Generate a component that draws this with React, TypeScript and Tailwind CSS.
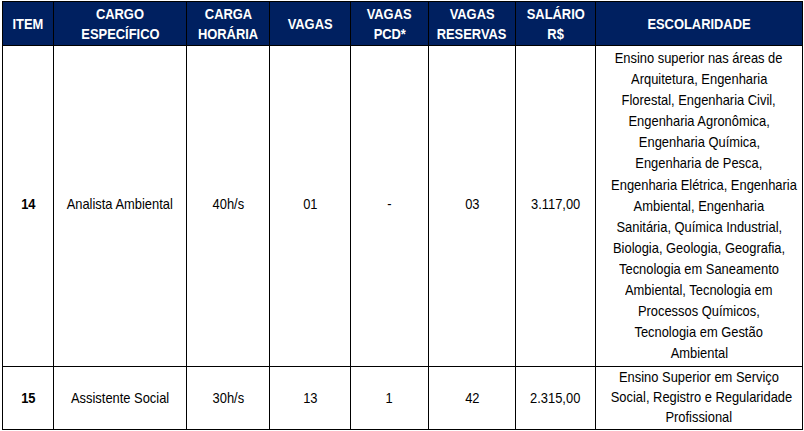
const heads = [
  ["ITEM"],
  ["CARGO", "ESPECÍFICO"],
  ["CARGA", "HORÁRIA"],
  ["VAGAS"],
  ["VAGAS", "PCD*"],
  ["VAGAS", "RESERVAS"],
  ["SALÁRIO", "R$"],
  ["ESCOLARIDADE"],
];

const widths = ["w-[51px]", "w-[133px]", "w-[83px]", "w-[81px]", "w-[78px]", "w-[87px]", "w-[80px]", "w-[207px]"];

const rows = [
  {
    item: "14",
    cargo: "Analista Ambiental",
    carga: "40h/s",
    vagas: "01",
    pcd: "-",
    reservas: "03",
    salario: "3.117,00",
    cell: "pb-[4px]",
    pad: "pt-[1px] pb-[3px] leading-[21.1px]",
    escolaridade: [
      "Ensino superior nas áreas de",
      "Arquitetura, Engenharia",
      "Florestal, Engenharia Civil,",
      "Engenharia Agronômica,",
      "Engenharia Química,",
      "Engenharia de Pesca,",
      "Engenharia Elétrica, Engenharia",
      "Ambiental, Engenharia",
      "Sanitária, Química Industrial,",
      "Biologia, Geologia, Geografia,",
      "Tecnologia em Saneamento",
      "Ambiental, Tecnologia em",
      "Processos Químicos,",
      "Tecnologia em Gestão",
      "Ambiental",
    ],
  },
  {
    item: "15",
    cargo: "Assistente Social",
    carga: "30h/s",
    vagas: "13",
    pcd: "1",
    reservas: "42",
    salario: "2.315,00",
    cell: "pb-[1px]",
    pad: "pt-0 pb-[2px] leading-[20px]",
    escolaridade: ["Ensino Superior em Serviço", "Social, Registro e Regularidade", "Profissional"],
  },
];

// Arial Narrow look: regular Liberation Sans squeezed horizontally
function Narrow({ children }: { children: React.ReactNode }) {
  return <span className="inline-block scale-x-[0.86] whitespace-nowrap">{children}</span>;
}

export default function App() {
  return (
    <div className="min-h-screen bg-white pl-[2px] pt-[1px] font-['Liberation_Sans',Arial,sans-serif] text-[15px]">
      <table className="w-[801px] table-fixed border-collapse">
        <colgroup>
          {widths.map((w, i) => (
            <col key={i} className={w} />
          ))}
        </colgroup>
        <thead>
          <tr className="h-[44px] bg-[#002060]">
            {heads.map((h, i) => (
              <th
                key={i}
                className="border border-black p-0 text-center align-middle text-[15px] font-bold leading-[20px] text-white"
              >
                {h.map((line) => (
                  <div key={line}>
                    <Narrow>{line}</Narrow>
                  </div>
                ))}
              </th>
            ))}
          </tr>
        </thead>
        <tbody className="text-black">
          {rows.map((r) => (
            <tr key={r.item}>
              <td className={`border border-black p-0 ${r.cell} text-center font-bold`}><Narrow>{r.item}</Narrow></td>
              <td className={`border border-black p-0 ${r.cell} text-center`}><Narrow>{r.cargo}</Narrow></td>
              <td className={`border border-black p-0 ${r.cell} text-center`}><Narrow>{r.carga}</Narrow></td>
              <td className={`border border-black p-0 ${r.cell} text-center`}><Narrow>{r.vagas}</Narrow></td>
              <td className={`border border-black p-0 ${r.cell} text-center`}><Narrow>{r.pcd}</Narrow></td>
              <td className={`border border-black p-0 ${r.cell} text-center`}><Narrow>{r.reservas}</Narrow></td>
              <td className={`border border-black p-0 ${r.cell} text-center`}><Narrow>{r.salario}</Narrow></td>
              <td className={`border border-black px-0 ${r.pad} text-center`}>
                {r.escolaridade.map((line) => (
                  <div key={line}>
                    <Narrow>{line}</Narrow>
                  </div>
                ))}
              </td>
            </tr>
          ))}
        </tbody>
      </table>
    </div>
  );
}
